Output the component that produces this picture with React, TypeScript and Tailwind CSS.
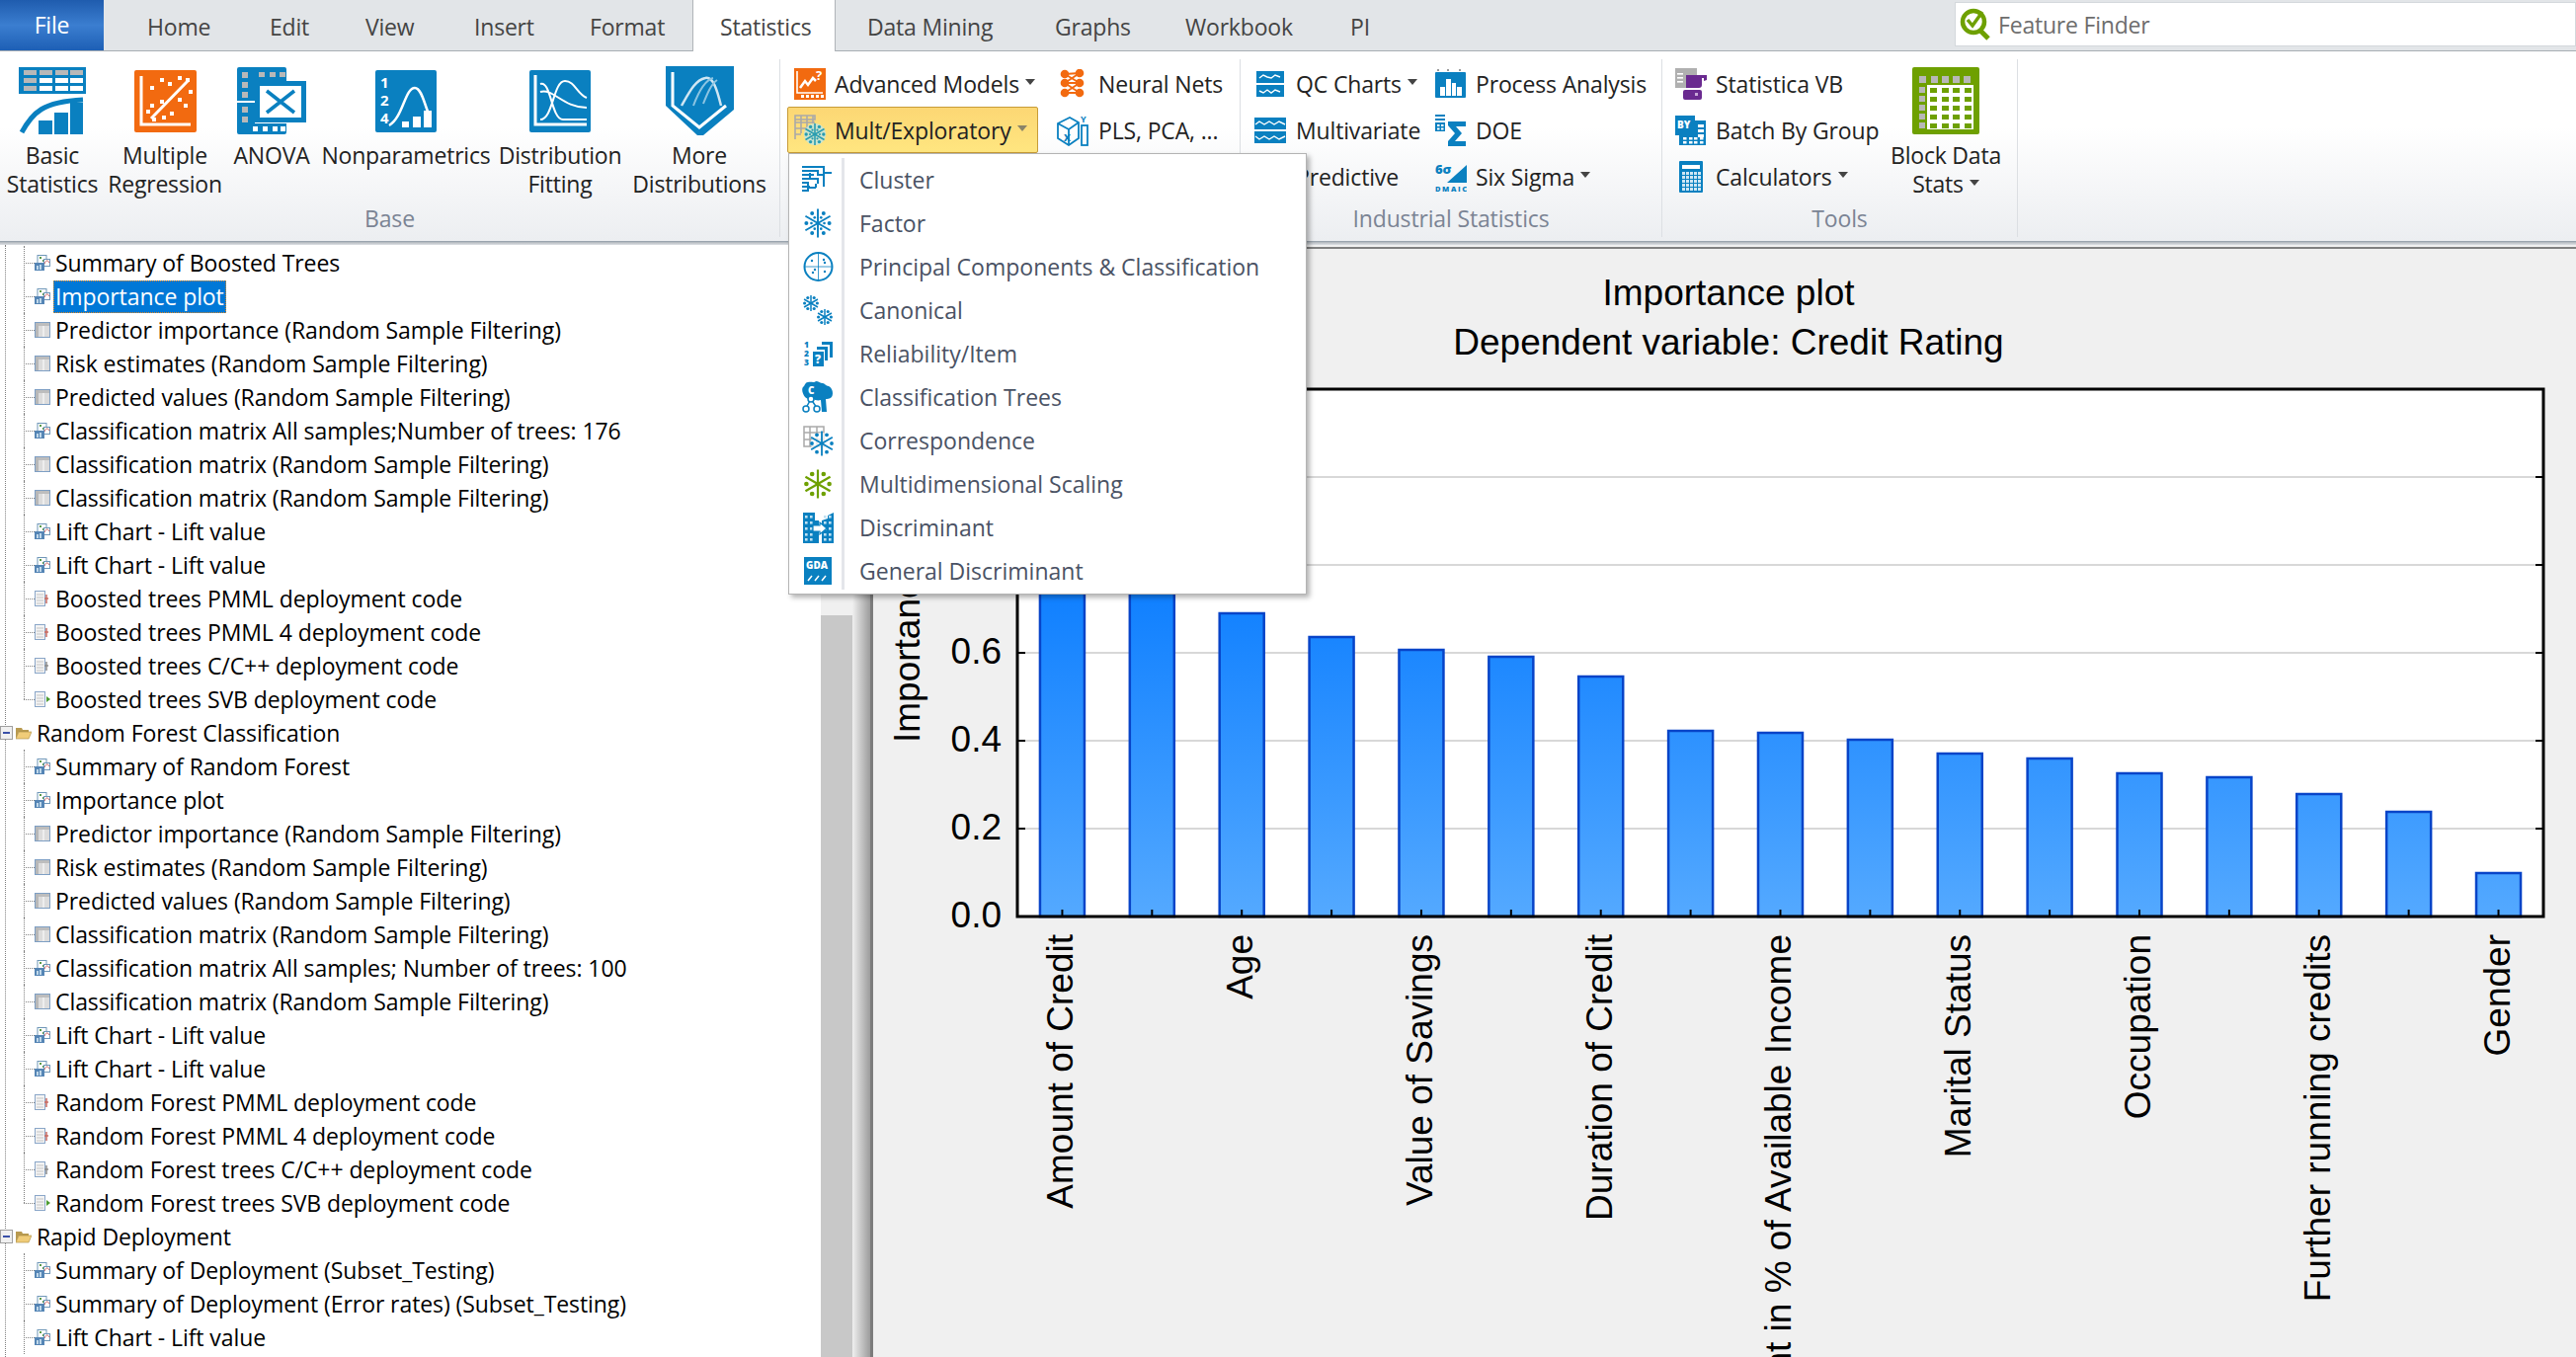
import React from 'react';

const B = '#0a80c0';
const O = '#f26a10';
const G = '#6ea000';

function Arrow({ light }: { light?: boolean }) {
  return (
    <svg width="10" height="6" viewBox="0 0 10 6" className="ml-[6px] mb-[4px] shrink-0">
      <path d="M0 0h10L5 6z" fill={light ? '#8a8468' : '#444'} />
    </svg>
  );
}

function Flake({ cx, cy, r, color, w = 1.6, inner = true }: { cx: number; cy: number; r: number; color: string; w?: number; inner?: boolean }) {
  const arms = [0, 60, 120];
  // dots sit between the arms
  const dots = [0, 60, 120, 180, 240, 300];
  return (
    <g stroke={color} strokeWidth={w} fill={color}>
      {arms.map((a) => {
        const t = ((a + 90) * Math.PI) / 180;
        return <line key={a} x1={cx - r * Math.cos(t)} y1={cy - r * Math.sin(t)} x2={cx + r * Math.cos(t)} y2={cy + r * Math.sin(t)} />;
      })}
      {dots.map((a) => {
        const t = (a * Math.PI) / 180;
        return <circle key={a} cx={cx + r * 0.8 * Math.cos(t)} cy={cy + r * 0.8 * Math.sin(t)} r={w * 1.05} stroke="none" />;
      })}
      {inner && dots.map((a) => {
        const t = (a * Math.PI) / 180;
        return <circle key={a} cx={cx + r * 0.45 * Math.cos(t)} cy={cy + r * 0.45 * Math.sin(t)} r={w * 0.7} stroke="none" />;
      })}
    </g>
  );
}

function BasicStatsIcon() {
  const cols = [5, 21, 37, 52];
  return (
    <svg width="68" height="68" viewBox="0 0 68 68">
      <rect width="68" height="27" fill={B} />
      {cols.map((x) => <rect key={x} x={x} y="3" width="13" height="5" fill="#b8b8b8" />)}
      {cols.map((x, i) => <rect key={x} x={x} y="11" width="13" height="5" fill={i === 0 ? '#b8b8b8' : '#fff'} />)}
      {cols.map((x, i) => <rect key={x} x={x} y="19" width="13" height="5" fill={i === 0 ? '#b8b8b8' : '#fff'} />)}
      <path d="M3 66C14 46 24 35 65 33" fill="none" stroke={B} strokeWidth="5" />
      <rect x="20" y="54" width="14" height="14" fill={B} />
      <rect x="36" y="46" width="14" height="22" fill={B} />
      <rect x="52" y="36" width="13" height="32" fill={B} />
    </svg>
  );
}

function RegressionIcon() {
  const pts = [[16, 16], [26, 8], [34, 12], [44, 6], [52, 8], [55, 20], [44, 28], [50, 34], [26, 30], [16, 34], [12, 40], [36, 42], [28, 46], [18, 48]];
  return (
    <svg width="63" height="63" viewBox="0 0 63 63">
      <rect width="63" height="63" rx="2" fill={O} />
      <path d="M7 6v49h50" fill="none" stroke="#fff" strokeWidth="3" />
      <line x1="17" y1="49" x2="55" y2="10" stroke="#fff" strokeWidth="3" />
      {pts.map(([x, y]) => <rect key={`${x}-${y}`} x={x} y={y} width="4" height="4" fill="#fff" />)}
    </svg>
  );
}

function AnovaIcon() {
  return (
    <svg width="70" height="68" viewBox="0 0 70 68">
      <path d="M2 0h46a2 2 0 0 1 2 2v12H18v20H0V2a2 2 0 0 1 2-2z" fill={B} />
      <path d="M0 36h18v21h32v9a2 2 0 0 1-2 2H2a2 2 0 0 1-2-2z" fill={B} />
      {[5, 15, 25].map((y) => <rect key={y} x="5" y={y} width="6" height="6" fill="#b8b8b8" />)}
      {[22, 33, 43].map((x) => <rect key={x} x={x} y="5" width="6" height="5" fill="#b8b8b8" />)}
      {[40, 50].map((y) => <rect key={y} x="5" y={y} width="6" height="6" fill="#b8b8b8" />)}
      {[16, 26, 36, 44].map((x) => <rect key={x} x={x} y="60" width="5" height="5" fill="#fff" />)}
      <rect x="18" y="14" width="52" height="42" fill={B} />
      <rect x="23" y="19" width="42" height="32" fill="#fff" />
      <path d="M30 24l28 22M58 24L30 46" stroke={B} strokeWidth="3.5" />
    </svg>
  );
}

function NonparamIcon() {
  return (
    <svg width="62" height="63" viewBox="0 0 62 63">
      <rect width="62" height="63" rx="2" fill={B} />
      <g fill="#fff" fontSize="15" fontWeight="700">
        <text x="5" y="18">1</text>
        <text x="5" y="36">2</text>
        <text x="5" y="54">4</text>
      </g>
      <path d="M14 56C28 48 30 18 40 18C47 18 50 36 54 44" fill="none" stroke="#fff" strokeWidth="2.5" />
      <rect x="27" y="52" width="7" height="6" fill="#fff" />
      <rect x="38" y="47" width="8" height="11" fill="#fff" />
      <rect x="49" y="41" width="8" height="17" fill="#fff" />
    </svg>
  );
}

function DistFitIcon() {
  return (
    <svg width="62" height="63" viewBox="0 0 62 63">
      <rect width="62" height="63" rx="2" fill={B} />
      <path d="M6 5v50h52" fill="none" stroke="#fff" strokeWidth="3" />
      <path d="M11 14C22 10 22 50 34 50H58M11 50C24 50 24 11 36 11C46 11 48 24 58 28M11 22C24 18 34 38 58 38" fill="none" stroke="#fff" strokeWidth="2" />
    </svg>
  );
}

function MoreDistIcon() {
  return (
    <svg width="69" height="70" viewBox="0 0 69 70">
      <path d="M0 0h69v44L38 70h-6L0 40z" fill={B} />
      <path d="M7 6v34l27 22 27-22" fill="none" stroke="#fff" strokeWidth="3" />
      <path d="M16 40C24 26 30 14 40 12C48 10 52 24 56 40" fill="none" stroke="#cfe6f3" strokeWidth="2.5" />
      <path d="M28 40C34 24 40 14 48 12M38 38C42 28 46 18 52 14" fill="none" stroke="#8cc4e2" strokeWidth="2" />
    </svg>
  );
}

function BlockDataIcon() {
  const xs = [18, 30, 41, 53];
  const ys = [20, 29, 38, 47, 56];
  return (
    <svg width="68" height="68" viewBox="0 0 68 68">
      <rect width="68" height="68" rx="2" fill={G} />
      {[7, 19, 30, 41, 52].map((x) => <rect key={x} x={x} y="9" width="7" height="7" fill="#b8b8b8" />)}
      {ys.map((y) => <rect key={y} x="7" y={y} width="6" height="6" fill="#b8b8b8" />)}
      <rect x="15" y="18" width="47" height="45" fill="#fff" />
      {ys.map((y) => xs.map((x) => <rect key={`${x}-${y}`} x={x} y={y + 1} width="7" height="5" fill={G} />))}
    </svg>
  );
}

function AdvancedIcon() {
  return (
    <svg width="32" height="32" viewBox="0 0 32 32">
      <rect width="32" height="32" fill={O} />
      <path d="M3 3v22h26" fill="none" stroke="#fff" strokeWidth="1.6" />
      <path d="M6 20l5-7 3 4 5-7 3 3" fill="none" stroke="#fff" strokeWidth="2.5" />
      <text x="22" y="12" fill="#fff" fontSize="13" fontWeight="700">?</text>
      {[7, 12, 17, 22, 27].map((x) => <rect key={x} x={x} y="27" width="3" height="3" fill="#fff" />)}
    </svg>
  );
}

function MultIcon() {
  return (
    <svg width="32" height="32" viewBox="0 0 32 32">
      <path d="M1 1h20v4H1zM1 8h20M1 14h12M1 20h6M1 1v24M7 1v18M13 1v12M19 1v8" fill="none" stroke="#a9a9a9" strokeWidth="1.6" />
      <circle cx="21" cy="20" r="11" fill="#bfe5e3" opacity="0.8" />
      <Flake cx={21} cy={20} r={11} color="#2a9db0" w={1.6} />
    </svg>
  );
}

function NeuralIcon() {
  const nodes = [[6, 5], [6, 14], [6, 24], [21, 4], [21, 14], [21, 24]];
  return (
    <svg width="26" height="29" viewBox="0 0 26 29">
      <path d="M6 5L21 4M6 5L21 14M6 14L21 4M6 14L21 14M6 14L21 24M6 24L21 14M6 24L21 24" stroke={O} strokeWidth="2" />
      {nodes.map(([x, y]) => <circle key={`${x}-${y}`} cx={x} cy={y} r="4.3" fill={O} />)}
    </svg>
  );
}

function PlsIcon() {
  return (
    <svg width="32" height="32" viewBox="0 0 32 32" fill="none" stroke={B} strokeWidth="1.8">
      <path d="M1 9L13 3l9 5v16l-10 7-11-7z" />
      <path d="M1 9l11 6 10-7M12 15v16" />
      <text x="7" y="27" fontSize="12" fontWeight="700" fill={B} stroke="none">x</text>
      <rect x="25" y="11" width="6" height="20" />
      <text x="24" y="8" fontSize="9" fontWeight="700" fill={B} stroke="none">Y</text>
    </svg>
  );
}

function QcIcon() {
  return (
    <svg width="28" height="26" viewBox="0 0 28 26">
      <rect width="28" height="12" fill={B} />
      <rect y="14" width="28" height="12" fill={B} />
      <path d="M3 7l4-3 4 2 4 1 4-3 5 2M3 20l4 2 4-3 4 3 4-3 5 2" fill="none" stroke="#fff" strokeWidth="1.4" />
    </svg>
  );
}

function MultivarIcon() {
  return (
    <svg width="32" height="26" viewBox="0 0 32 26">
      <rect width="32" height="12" fill={B} />
      <rect y="14" width="32" height="12" fill={B} />
      <path d="M1 7l4-3 5 3 5-3 5 3 5-3 6 3M1 19l4 3 5-3 5 3 5-3 5 3 6-3" fill="none" stroke="#fff" strokeWidth="1.4" />
    </svg>
  );
}

function ProcessIcon() {
  return (
    <svg width="31" height="29" viewBox="0 0 31 29">
      <rect y="3" width="31" height="26" rx="1" fill={B} />
      {[2, 12, 24].map((x) => <rect key={x} x={x} y="0" width="2" height="2" fill="#9a9a9a" />)}
      <rect x="5" y="18" width="5" height="9" fill="#fff" />
      <rect x="11" y="10" width="5" height="17" fill="#fff" />
      <rect x="17" y="14" width="4" height="13" fill="#fff" />
      <rect x="22" y="18" width="5" height="9" fill="#fff" />
    </svg>
  );
}

function DoeIcon() {
  return (
    <svg width="32" height="32" viewBox="0 0 32 32">
      <rect x="0" y="0" width="10" height="2" fill={B} />
      <rect x="0" y="4" width="10" height="2" fill={B} />
      <rect x="0" y="8" width="10" height="9" fill={B} />
      <rect x="2" y="10" width="2.5" height="2" fill="#fff" />
      <rect x="6" y="10" width="2.5" height="2" fill="#fff" />
      <rect x="2" y="13.5" width="2.5" height="2" fill="#fff" />
      <rect x="6" y="13.5" width="2.5" height="2" fill="#fff" />
      <path d="M13 7h18v5h-10l6 7-7 8h11v5H13v-5l7-8-7-8z" fill={B} />
    </svg>
  );
}

function SixSigmaIcon() {
  return (
    <svg width="32" height="32" viewBox="0 0 32 32">
      <path d="M32 4v18H12z" fill={B} />
      <text x="0" y="13" fontSize="13" fontWeight="800" fill={B}>6σ</text>
      <text x="0" y="31" fontSize="7.5" fontWeight="800" fill={B} textLength="32">DMAIC</text>
    </svg>
  );
}

function VbIcon() {
  return (
    <svg width="32" height="32" viewBox="0 0 32 32">
      <rect width="22" height="20" fill="#b0b0b0" />
      {[5, 9, 13].map((y) => <rect key={y} x="2" y={y} width="6" height="1.6" fill="#fff" />)}
      <path d="M11 7h21v5l-3 1v-3h-2v7a3 3 0 0 1-3 3H11z" fill="#6a2a90" />
      <rect x="8" y="22" width="19" height="10" rx="2" fill="#6a2a90" />
      <rect x="20" y="25" width="3" height="3" fill="#c8a8d8" />
    </svg>
  );
}

function BatchIcon() {
  return (
    <svg width="31" height="30" viewBox="0 0 31 30">
      <rect x="4" y="5" width="27" height="25" fill={B} />
      {[8, 14, 19, 25].map((x) => [22, 26].map((y) => <rect key={`${x}-${y}`} x={x} y={y} width="3.5" height="2.5" fill="#fff" />))}
      {[9, 14, 19].map((y) => <rect key={y} x="23" y={y} width="6" height="3" fill="#fff" />)}
      <rect width="20" height="20" fill={B} />
      <text x="2" y="13" fontSize="10" fontWeight="800" fill="#fff">BY</text>
    </svg>
  );
}

function CalcIcon() {
  const ys = [11, 15, 19, 23, 27];
  return (
    <svg width="24" height="32" viewBox="0 0 24 32">
      <rect width="24" height="32" rx="1" fill={B} />
      <rect x="3" y="4" width="18" height="4" fill="#fff" />
      {ys.map((y) => [3, 7, 11, 15, 19].map((x) => <rect key={`${x}-${y}`} x={x} y={y} width="3" height="3" fill="#cfe6f3" />))}
    </svg>
  );
}

function FinderIcon() {
  return (
    <svg width="33" height="33" viewBox="0 0 33 33" fill="none">
      <circle cx="14" cy="14" r="11" stroke={G} strokeWidth="4.5" />
      <path d="M21 23l8 8" stroke={G} strokeWidth="5" />
      <path d="M8 12l5 6 10-14" stroke={G} strokeWidth="3.5" />
    </svg>
  );
}

function MenuIcon({ name }: { name: string }) {
  if (name === 'Cluster') {
    return (
      <svg width="32" height="30" viewBox="0 0 32 30" fill="none" stroke={B} strokeWidth="2">
        <path d="M0 2h22v6h8M0 6h16v4h6M22 2v20M0 10h12M0 14h16v5M0 18h6v5h8M0 22h8M0 26h6v-3M8 8v6M14 19v4" />
      </svg>
    );
  }
  if (name === 'Factor') {
    return <svg width="30" height="30" viewBox="0 0 30 30"><Flake cx={15} cy={15} r={14.5} color={B} w={1.9} /></svg>;
  }
  if (name === 'Principal') {
    return (
      <svg width="31" height="30" viewBox="0 0 31 30" fill="none" stroke={B} strokeWidth="2">
        <circle cx="15.5" cy="15" r="14" />
        <path d="M15.5 1v28M1.500 15h28" strokeWidth="0.8" />
        {[[9, 9], [21, 8], [22, 11], [10, 21], [12, 18], [22, 20]].map(([x, y]) => <circle key={`${x}-${y}`} cx={x} cy={y} r="1.2" fill={B} stroke="none" />)}
      </svg>
    );
  }
  if (name === 'Canonical') {
    return (
      <svg width="31" height="30" viewBox="0 0 31 30">
        <Flake cx={8} cy={8} r={8} color={B} w={1.5} inner={false} />
        <Flake cx={22} cy={22} r={8} color={B} w={1.5} inner={false} />
      </svg>
    );
  }
  if (name === 'Reliability') {
    return (
      <svg width="29" height="26" viewBox="0 0 29 26">
        <g fontSize="8.500" fontWeight="800" fill={B}><text x="0" y="7">1</text><text x="0" y="16">2</text><text x="0" y="25">3</text></g>
        <path d="M18 1h11v16h-3V4h-8z" fill={B} />
        <path d="M13 6h11v14h-3V9h-8z" fill={B} />
        <rect x="9" y="11" width="11" height="15" fill={B} />
        <text x="11" y="23" fontSize="12" fontWeight="800" fill="#fff">?</text>
      </svg>
    );
  }
  if (name === 'Trees') {
    return (
      <svg width="32" height="32" viewBox="0 0 32 32">
        <path d="M6 1c3-1 6 1 8-1 3 0 4 2 7 2 2 0 3 3 6 3 4 2 5 8 3 11-2 2-5 2-6 2l1 13h-5l-1-12c-3 1-6 0-8-1-2 1-6 0-8-2-3-4-4-9-1-11 1-2 2-4 4-4z" fill={B} />
        <text x="6" y="13" fontSize="10" fontWeight="800" fill="#fff">C</text>
        <g fill="#fff" stroke={B} strokeWidth="1.500">
          <path d="M4 27l5-9 6 9" fill="none" />
          <circle cx="9" cy="18" r="3" />
          <circle cx="4" cy="28" r="3" />
          <circle cx="15" cy="28" r="3" />
        </g>
      </svg>
    );
  }
  if (name === 'Correspondence') {
    return (
      <svg width="31" height="31" viewBox="0 0 31 31">
        <path d="M1 1h20v20H1zM1 7h20M1 14h20M7 1v20M14 1v20" fill="none" stroke="#a9a9a9" strokeWidth="1.500" />
        <circle cx="19" cy="18" r="11" fill="#fff" opacity="0.7" />
        <Flake cx={19} cy={18} r={12.500} color={B} w={1.8} inner={false} />
      </svg>
    );
  }
  if (name === 'MDS') {
    return <svg width="30" height="30" viewBox="0 0 30 30"><Flake cx={15} cy={15} r={14.500} color={G} w={2.200} inner={false} /></svg>;
  }
  if (name === 'Discriminant') {
    return (
      <svg width="31" height="31" viewBox="0 0 31 31">
        <path d="M0 0h12v8h4v23H0zM19 31V8l6-2V3l6-3v31z" fill={B} />
        {[3, 9, 15, 21, 26].map((y) => [2, 7, 21, 26].map((x) => <rect key={`${x}-${y}`} x={x} y={y} width="2.600" height="2.600" fill="#bfe0f2" />))}
        <path d="M10 13h7v-3l7 6-7 6v-3h-7z" fill="#fff" stroke={B} strokeWidth="1.200" />
      </svg>
    );
  }
  return (
    <svg width="28" height="28" viewBox="0 0 28 28">
      <rect width="28" height="28" fill={B} />
      <text x="2" y="12" fontSize="10" fontWeight="800" fill="#fff">GDA</text>
      <path d="M4 24l4-5M11 24l4-5M18 24l4-5" stroke="#fff" strokeWidth="1.500" />
    </svg>
  );
}

function TreeIcon({ kind }: { kind: string }) {
  if (kind === 'chart') {
    return (
      <svg width="16" height="16" viewBox="0 0 16 16">
        <rect x="3" y="0.500" width="9" height="9" fill="#fff" stroke="#6f97b8" />
        <rect x="5" y="2" width="2" height="2" fill="#5a9a4a" />
        <rect x="8" y="5" width="2" height="2" fill="#5a9a4a" />
        <rect x="9.500" y="4.500" width="6" height="7" fill="#fff" stroke="#6f97b8" />
        <path d="M10 9c2-4 3-4 5-1" fill="none" stroke="#d06060" />
        <rect x="0" y="8" width="10" height="8" fill="#5585b5" />
        <rect x="2" y="11" width="2" height="4" fill="#c0d8ea" />
        <rect x="5" y="10" width="2" height="5" fill="#c0d8ea" />
      </svg>
    );
  }
  if (kind === 'table') {
    return (
      <svg width="16" height="16" viewBox="0 0 16 16">
        <rect x="0.500" y="0.500" width="15" height="15" fill="#dcdcdc" stroke="#7e9fc4" />
        <rect x="1" y="1" width="14" height="3" fill="#bdbdbd" />
        <rect x="1" y="1" width="3" height="14" fill="#b8b8b8" />
        <path d="M9 4v11" stroke="#fff" />
      </svg>
    );
  }
  const accent = kind === 'svb' ? '#4a9a30' : kind === 'pmml' ? '#c86a60' : '#8a8a8a';
  return (
    <svg width="16" height="16" viewBox="0 0 16 16">
      <rect x="0.500" y="0.500" width="10" height="15" fill="#f4f4f4" stroke="#8aa6c8" />
      <path d="M2 4h7M2 7h7M2 10h7M2 13h7" stroke="#c4c4c4" />
      {kind === 'svb' ? <path d="M12 5l4 3-4 3z" fill={accent} /> : <path d="M12 4v9M10 8h4" stroke={accent} strokeWidth="1.500" />}
    </svg>
  );
}

function FolderIcon() {
  return (
    <svg width="16" height="14" viewBox="0 0 16 14">
      <path d="M0 2h6l1 2h6v2H3L0 13z" fill="#b89a50" />
      <path d="M3 6h13l-3 7H0z" fill="#f0cc78" stroke="#a88a40" strokeWidth="0.600" />
    </svg>
  );
}

type Row = { t: string; k: string; last?: boolean; sel?: boolean };

const rows: Row[] = [
  { t: 'Summary of Boosted Trees', k: 'chart' },
  { t: 'Importance plot', k: 'chart', sel: true },
  { t: 'Predictor importance (Random Sample Filtering)', k: 'table' },
  { t: 'Risk estimates (Random Sample Filtering)', k: 'table' },
  { t: 'Predicted values (Random Sample Filtering)', k: 'table' },
  { t: 'Classification matrix All samples;Number of trees: 176', k: 'chart' },
  { t: 'Classification matrix (Random Sample Filtering)', k: 'table' },
  { t: 'Classification matrix (Random Sample Filtering)', k: 'table' },
  { t: 'Lift Chart - Lift value', k: 'chart' },
  { t: 'Lift Chart - Lift value', k: 'chart' },
  { t: 'Boosted trees PMML deployment code', k: 'pmml' },
  { t: 'Boosted trees PMML 4 deployment code', k: 'pmml' },
  { t: 'Boosted trees C/C++ deployment code', k: 'cpp' },
  { t: 'Boosted trees SVB deployment code', k: 'svb', last: true },
  { t: 'Random Forest Classification', k: 'folder' },
  { t: 'Summary of Random Forest', k: 'chart' },
  { t: 'Importance plot', k: 'chart' },
  { t: 'Predictor importance (Random Sample Filtering)', k: 'table' },
  { t: 'Risk estimates (Random Sample Filtering)', k: 'table' },
  { t: 'Predicted values (Random Sample Filtering)', k: 'table' },
  { t: 'Classification matrix (Random Sample Filtering)', k: 'table' },
  { t: 'Classification matrix All samples; Number of trees: 100', k: 'chart' },
  { t: 'Classification matrix (Random Sample Filtering)', k: 'table' },
  { t: 'Lift Chart - Lift value', k: 'chart' },
  { t: 'Lift Chart - Lift value', k: 'chart' },
  { t: 'Random Forest PMML deployment code', k: 'pmml' },
  { t: 'Random Forest PMML 4 deployment code', k: 'pmml' },
  { t: 'Random Forest trees C/C++ deployment code', k: 'cpp' },
  { t: 'Random Forest trees SVB deployment code', k: 'svb', last: true },
  { t: 'Rapid Deployment', k: 'folder' },
  { t: 'Summary of Deployment (Subset_Testing)', k: 'chart' },
  { t: 'Summary of Deployment (Error rates) (Subset_Testing)', k: 'chart' },
  { t: 'Lift Chart - Lift value', k: 'chart' },
];

function Tree() {
  return (
    <div className="relative w-[831px] shrink-0 overflow-hidden bg-white pt-[1px] text-[23px] tracking-[-0.08px] text-black">
      <div className="absolute left-[5px] top-0 bottom-0 border-l border-dotted border-[#808080]" />
      {rows.map((r, i) =>
        r.k === 'folder' ? (
          <div key={i} className="relative flex h-[34px] items-center">
            <div className="relative flex h-[14px] w-[13px] items-center justify-center border border-[#a0a0a0] bg-[#f0f0f0]">
              <div className="h-[2px] w-[7px] bg-[#3a50a8]" />
            </div>
            <div className="ml-[3px] flex w-[21px] shrink-0"><FolderIcon /></div>
            <span className="whitespace-nowrap">{r.t}</span>
          </div>
        ) : (
          <div key={i} className="relative flex h-[34px] items-center pl-[35px]">
            <div className={r.last ? 'absolute left-[24px] top-0 h-[17px] border-l border-dotted border-[#808080]' : 'absolute left-[24px] top-0 h-[34px] border-l border-dotted border-[#808080]'} />
            <div className="absolute left-[24px] top-[17px] w-[11px] border-t border-dotted border-[#808080]" />
            <div className="flex w-[19px] shrink-0"><TreeIcon kind={r.k} /></div>
            <span className={r.sel ? 'flex h-[33px] items-center whitespace-nowrap bg-[#0078d7] px-[2px] text-white outline-1 -outline-offset-1 outline-dotted outline-[#e08a20]' : 'whitespace-nowrap pl-[2px]'}>{r.t}</span>
          </div>
        )
      )}
    </div>
  );
}

const menuItems = [
  ['Cluster', 'Cluster'],
  ['Factor', 'Factor'],
  ['Principal', 'Principal Components & Classification'],
  ['Canonical', 'Canonical'],
  ['Reliability', 'Reliability/Item'],
  ['Trees', 'Classification Trees'],
  ['Correspondence', 'Correspondence'],
  ['MDS', 'Multidimensional Scaling'],
  ['Discriminant', 'Discriminant'],
  ['GDA', 'General Discriminant'],
];

function MultMenu() {
  return (
    <div className="absolute left-[798px] top-[155px] z-10 w-[525px] border border-[#b4b4b4] bg-white pb-[1px] pt-[4px] shadow-[3px_3px_5px_rgba(0,0,0,0.3)]">
      <div className="absolute left-[53px] top-[4px] bottom-[4px] w-[3px] bg-[#e4e6ea]" />
      {menuItems.map(([key, label]) => (
        <div key={key} className="flex h-[44px] items-center">
          <div className="flex w-[71px] shrink-0 justify-center pr-[13px]"><MenuIcon name={key} /></div>
          <span className="text-[23px] text-[#4a5264]">{label}</span>
        </div>
      ))}
    </div>
  );
}

function Large({ icon, lines, w, arrow }: { icon: React.ReactNode; lines: string[]; w: string; arrow?: boolean }) {
  return (
    <div className={`${w} flex shrink-0 flex-col items-center pt-[8px]`}>
      <div className="flex h-[68px] items-center justify-center">{icon}</div>
      <div className="mt-[7px] flex flex-col items-center whitespace-nowrap text-[23px] leading-[29px] tracking-[-0.2px] text-[#222]">
        {lines.map((l, i) => (
          <span key={l} className="flex items-center">{l}{arrow && i === lines.length - 1 && <Arrow />}</span>
        ))}
      </div>
    </div>
  );
}

function Small({ icon, label, arrow, hot, box }: { icon: React.ReactNode; label: string; arrow?: boolean; hot?: boolean; box: string }) {
  return (
    <div className={hot ? 'flex h-[47px] items-center rounded-[2px] border border-[#c89c38] bg-linear-to-b from-[#fcd774] to-[#ffe680] -mx-px' : 'flex h-[47px] items-center'}>
      <div className={`${box} flex shrink-0 items-center`}>{icon}</div>
      <span className="whitespace-nowrap pt-[2px] text-[23px] tracking-[-0.15px] text-[#222]">{label}</span>
      {arrow && <Arrow light={hot} />}
    </div>
  );
}

function GroupLabel({ children }: { children: string }) {
  return <div className="flex h-[38px] items-center justify-center text-[23px] tracking-[-0.15px] text-[#7b8494]">{children}</div>;
}

function Ribbon() {
  return (
    <div className="flex h-[193px] shrink-0 border-b border-[#9aa4ae] bg-linear-to-b from-white from-40% to-[#eceef1] pt-[8px]">
      <div className="h-[180px] w-[790px] shrink-0 border-r border-[#dcdfe3]">
        <div className="flex h-[142px]">
          <Large w="w-[106px]" icon={<BasicStatsIcon />} lines={['Basic', 'Statistics']} />
          <Large w="w-[122px]" icon={<RegressionIcon />} lines={['Multiple', 'Regression']} />
          <Large w="w-[94px]" icon={<AnovaIcon />} lines={['ANOVA']} />
          <Large w="w-[178px]" icon={<NonparamIcon />} lines={['Nonparametrics']} />
          <Large w="w-[134px]" icon={<DistFitIcon />} lines={['Distribution', 'Fitting']} />
          <Large w="w-[148px]" icon={<MoreDistIcon />} lines={['More', 'Distributions']} />
        </div>
        <GroupLabel>Base</GroupLabel>
      </div>
      <div className="h-[180px] w-[466px] shrink-0 border-r border-[#dcdfe3]">
        <div className="flex h-[142px] pt-[1px]">
          <div className="ml-[8px] w-[262px] shrink-0">
            <Small box="w-[47px] pl-[6px]" icon={<AdvancedIcon />} label="Advanced Models" arrow />
            <div className="w-[252px]">
              <Small hot box="w-[47px] pl-[6px]" icon={<MultIcon />} label="Mult/Exploratory" arrow />
            </div>
          </div>
          <div>
            <Small box="w-[52px] pl-[12px]" icon={<NeuralIcon />} label="Neural Nets" />
            <Small box="w-[52px] pl-[10px]" icon={<PlsIcon />} label="PLS, PCA, ..." />
          </div>
        </div>
        <GroupLabel>{'\u00a0'}</GroupLabel>
      </div>
      <div className="h-[180px] w-[427px] shrink-0 border-r border-[#dcdfe3]">
        <div className="flex h-[142px] pt-[1px]">
          <div className="w-[195px] shrink-0">
            <Small box="w-[56px] pl-[16px]" icon={<QcIcon />} label="QC Charts" arrow />
            <Small box="w-[56px] pl-[14px]" icon={<MultivarIcon />} label="Multivariate" />
            <Small box="w-[56px] pl-[14px]" icon={null} label="Predictive" />
          </div>
          <div>
            <Small box="w-[43px] pl-[2px]" icon={<ProcessIcon />} label="Process Analysis" />
            <Small box="w-[43px] pl-[2px]" icon={<DoeIcon />} label="DOE" />
            <Small box="w-[43px] pl-[2px]" icon={<SixSigmaIcon />} label="Six Sigma" arrow />
          </div>
        </div>
        <GroupLabel>Industrial Statistics</GroupLabel>
      </div>
      <div className="h-[180px] w-[360px] shrink-0 border-r border-[#dcdfe3]">
        <div className="flex h-[142px] pt-[1px]">
          <div className="w-[216px] shrink-0">
            <Small box="w-[54px] pl-[13px]" icon={<VbIcon />} label="Statistica VB" />
            <Small box="w-[54px] pl-[13px]" icon={<BatchIcon />} label="Batch By Group" />
            <Small box="w-[54px] pl-[17px]" icon={<CalcIcon />} label="Calculators" arrow />
          </div>
          <div className="-mt-[1px]">
            <Large w="w-[142px]" icon={<BlockDataIcon />} lines={['Block Data', 'Stats']} arrow />
          </div>
        </div>
        <GroupLabel>Tools</GroupLabel>
      </div>
    </div>
  );
}

function TabBar() {
  const tabs = [
    { t: 'Home', w: 'w-[124px]' },
    { t: 'Edit', w: 'w-[97px]' },
    { t: 'View', w: 'w-[110px]' },
    { t: 'Insert', w: 'w-[117px]' },
    { t: 'Format', w: 'w-[104px]' },
  ];
  const right = [
    { t: 'Data Mining', w: 'w-[190px]' },
    { t: 'Graphs', w: 'w-[132px]' },
    { t: 'Workbook', w: 'w-[167px]' },
    { t: 'PI', w: 'w-[60px]' },
  ];
  return (
    <div className="relative flex h-[52px] shrink-0 border-b border-[#a8aeb4] bg-[#e2e5e8] text-[23px] tracking-[-0.2px] text-[#444]">
      <div className="flex h-[51px] w-[105px] shrink-0 items-center justify-center bg-linear-to-b from-[#1f5cae] via-[#3b7ed0] to-[#1d5fb5] text-white">File</div>
      <div className="flex pl-[44px]">
        {tabs.map((t) => <div key={t.t} className={`${t.w} flex h-[51px] items-center pt-[3px]`}>{t.t}</div>)}
      </div>
      <div className="z-[1] flex h-[52px] w-[145px] shrink-0 items-center border-x border-[#b0b4b8] bg-white pl-[27px] pt-[3px]">Statistics</div>
      <div className="flex pl-[32px]">
        {right.map((t) => <div key={t.t} className={`${t.w} flex h-[51px] items-center pt-[3px]`}>{t.t}</div>)}
      </div>
      <div className="absolute left-[1979px] right-0 top-[2px] flex h-[45px] items-center border border-[#d4d8dc] bg-white pl-[4px] text-[#6d6d6d]">
        <FinderIcon />
        <span className="ml-[6px] pt-[2px]">Feature Finder</span>
      </div>
    </div>
  );
}

const barTops = [483, 560, 621, 645, 658, 665, 685, 740, 742, 749, 763, 768, 783, 787, 804, 822, 884];
const xLabels: [number, string][] = [
  [0, 'Amount of Credit'],
  [2, 'Age'],
  [4, 'Value of Savings'],
  [6, 'Duration of Credit'],
  [8, 'Installment in % of Available Income'],
  [10, 'Marital Status'],
  [12, 'Occupation'],
  [14, 'Further running credits'],
  [16, 'Gender'],
];
const barX = (i: number) => 1030 + 90.88 * (i + 0.5);

function Chart() {
  const ticks = [928, 839, 750, 661, 572, 483, 394];
  return (
    <svg width="1724" height="1122" viewBox="884 252 1724 1122" className="block font-['Liberation_Sans',sans-serif]">
      <defs>
        <linearGradient id="barFill" gradientUnits="userSpaceOnUse" x1="0" y1="394" x2="0" y2="928">
          <stop offset="0" stopColor="#0070ff" />
          <stop offset="0.39" stopColor="#1080ff" />
          <stop offset="1" stopColor="#54a9ff" />
        </linearGradient>
      </defs>
      <text x="1750" y="309" textAnchor="middle" fontSize="37" fill="#000">Importance plot</text>
      <text x="1750" y="359" textAnchor="middle" fontSize="37" fill="#000">Dependent variable: Credit Rating</text>
      <rect x="1030" y="394" width="1545" height="534" fill="#fff" />
      {ticks.slice(1, -1).map((y) => <line key={y} x1="1030" x2="2575" y1={y} y2={y} stroke="#d8d8d8" strokeWidth="2" />)}
      {barTops.map((y, i) => (
        <rect key={i} x={barX(i) - 22.500} y={y} width="45" height={928 - y} fill="url(#barFill)" stroke="#0844c8" strokeWidth="2.500" />
      ))}
      {barTops.map((_, i) => <line key={i} x1={barX(i)} x2={barX(i)} y1="921" y2="928" stroke="#000" strokeWidth="2" />)}
      {ticks.map((y) => <line key={y} x1="1030" x2="1038" y1={y} y2={y} stroke="#000" strokeWidth="2" />)}
      {ticks.map((y) => <line key={y} x1="2567" x2="2575" y1={y} y2={y} stroke="#000" strokeWidth="2" />)}
      <rect x="1030" y="394" width="1545" height="534" fill="none" stroke="#000" strokeWidth="3" />
      {['0.0', '0.2', '0.4', '0.6', '0.8', '1.0', '1.2'].map((l, i) => (
        <text key={l} x="1014" y={ticks[i] + 11} textAnchor="end" fontSize="37" fill="#000">{l}</text>
      ))}
      <text transform="translate(931 752) rotate(-90)" fontSize="37" fill="#000">Importance</text>
      {xLabels.map(([i, l]) => (
        <text key={l} transform={`translate(${barX(i) + 11} 946) rotate(-90)`} textAnchor="end" fontSize="37" fill="#000">{l}</text>
      ))}
    </svg>
  );
}

export default function App() {
  return (
    <div className="relative flex h-[1374px] w-[2608px] flex-col overflow-hidden bg-white font-['Open_Sans',sans-serif]">
      <TabBar />
      <Ribbon />
      <div className="h-[3px] shrink-0 bg-linear-to-b from-[#aeb4ba] to-[#dfe2e5]" />
      <div className="flex min-h-0 flex-1">
        <Tree />
        <div className="flex w-[32px] shrink-0 flex-col bg-[#f0f0f0]">
          <div className="h-[375px] shrink-0" />
          <div className="flex-1 bg-[#c8c8c8]" />
        </div>
        <div className="w-[18px] shrink-0 bg-linear-to-r from-[#f0f0f0] to-[#9c9c9c]" />
        <div className="w-[3px] shrink-0 bg-[#7c7c7c]" />
        <div className="min-w-0 flex-1 bg-[#f0f0f0]">
          <div className="h-[4px] border-b-2 border-[#808080] bg-[#f0f0f0]" />
          <Chart />
        </div>
      </div>
      <MultMenu />
    </div>
  );
}
